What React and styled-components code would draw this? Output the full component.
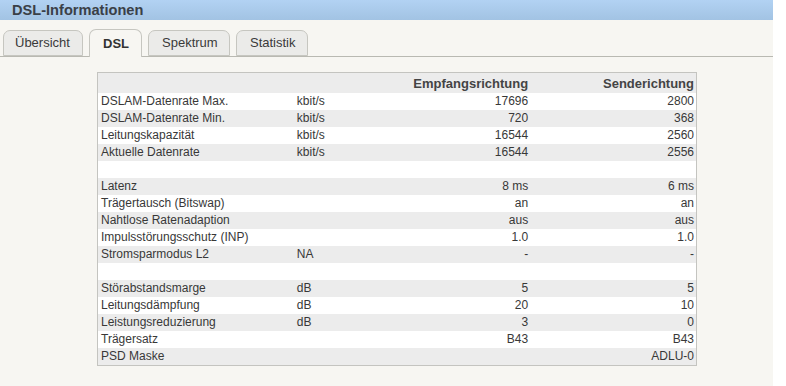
import React from "react";
import styled, { createGlobalStyle } from "styled-components";

const Global = createGlobalStyle`
  html, body {
    margin: 0;
    padding: 0;
    background: #ffffff;
    font-family: "Liberation Sans", Arial, sans-serif;
  }
`;

const Page = styled.div`
  width: 773px;
  height: 386px;
  background: #f7f6f2;
  display: flex;
  flex-direction: column;
`;

const Title = styled.div`
  height: 20px;
  line-height: 21px;
  padding-left: 12px;
  font-size: 14.6px;
  font-weight: bold;
  color: #3a4047;
  background: linear-gradient(#b2d2f3, #a2c3e3);
`;

const Tabs = styled.div`
  display: flex;
  align-items: flex-end;
  gap: 6px;
  margin-top: 9px;
  padding-left: 3px;
  height: 27px;
  border-bottom: 1px solid #b9b9b2;
`;

const Tab = styled.div`
  box-sizing: border-box;
  height: ${(p) => (p.$active ? "28px" : "26px")};
  margin-bottom: ${(p) => (p.$active ? "-1px" : "0")};
  padding: 0 0 1px ${(p) => p.$pad}px;
  width: ${(p) => p.$w}px;
  display: flex;
  align-items: center;
  font-size: 13px;
  font-weight: ${(p) => (p.$active ? "bold" : "normal")};
  color: ${(p) => (p.$active ? "#333" : "#3a3a3a")};
  background: ${(p) => (p.$active ? "#f7f6f2" : "#ebebe9")};
  border: 1px solid #c6c6c0;
  border-bottom: ${(p) => (p.$active ? "none" : "1px solid #c6c6c0")};
  border-radius: 7px 7px 0 0;
`;

const Content = styled.div`
  padding: 15px 0 0 97px;
`;

const Table = styled.table`
  border-collapse: collapse;
  border: 1px solid #c4c4c0;
  width: 600px;
  table-layout: fixed;
  font-size: 12px;
  color: #383838;
`;

const Row = styled.tr`
  height: 17px;
  background: ${(p) => (p.$odd ? "#ececec" : "#ffffff")};
`;

const HeadRow = styled.tr`
  height: 20px;
  background: #ececec;
`;

const Th = styled.th`
  padding: 2px 2px 0 3px;
  font-size: 13px;
  font-weight: bold;
  color: #444;
  text-align: right;
  white-space: nowrap;
`;

const Td = styled.td`
  padding: 0 2px 0 3px;
  line-height: 17px;
  white-space: nowrap;
  text-align: ${(p) => (p.$right ? "right" : "left")};
`;

const rows = [
  ["DSLAM-Datenrate Max.", "kbit/s", "17696", "2800"],
  ["DSLAM-Datenrate Min.", "kbit/s", "720", "368"],
  ["Leitungskapazität", "kbit/s", "16544", "2560"],
  ["Aktuelle Datenrate", "kbit/s", "16544", "2556"],
  null,
  ["Latenz", "", "8 ms", "6 ms"],
  ["Trägertausch (Bitswap)", "", "an", "an"],
  ["Nahtlose Ratenadaption", "", "aus", "aus"],
  ["Impulsstörungsschutz (INP)", "", "1.0", "1.0"],
  ["Stromsparmodus L2", "NA", "-", "-"],
  null,
  ["Störabstandsmarge", "dB", "5", "5"],
  ["Leitungsdämpfung", "dB", "20", "10"],
  ["Leistungsreduzierung", "dB", "3", "0"],
  ["Trägersatz", "", "B43", "B43"],
  ["PSD Maske", "", "", "ADLU-0"],
];

const tabs = [
  { label: "Übersicht", w: 80, pad: 11 },
  { label: "DSL", w: 53, pad: 13, active: true },
  { label: "Spektrum", w: 82, pad: 13 },
  { label: "Statistik", w: 72, pad: 13 },
];

export default function App() {
  return (
    <>
      <Global />
      <Page>
        <Title>DSL-Informationen</Title>
        <Tabs>
          {tabs.map((t) => (
            <Tab key={t.label} $active={t.active} $w={t.w} $pad={t.pad}>
              {t.label}
            </Tab>
          ))}
        </Tabs>
        <Content>
          <Table>
            <colgroup>
              <col style={{ width: 196 }} />
              <col style={{ width: 106 }} />
              <col style={{ width: 130 }} />
              <col style={{ width: 166 }} />
            </colgroup>
            <thead>
              <HeadRow>
                <Th />
                <Th />
                <Th>Empfangsrichtung</Th>
                <Th>Senderichtung</Th>
              </HeadRow>
            </thead>
            <tbody>
              {rows.map((r, i) => (
                <Row key={i} $odd={i % 2 === 1}>
                  {r ? (
                    <>
                      <Td>{r[0]}</Td>
                      <Td>{r[1]}</Td>
                      <Td $right>{r[2]}</Td>
                      <Td $right>{r[3]}</Td>
                    </>
                  ) : (
                    <Td colSpan={4} />
                  )}
                </Row>
              ))}
            </tbody>
          </Table>
        </Content>
      </Page>
    </>
  );
}
